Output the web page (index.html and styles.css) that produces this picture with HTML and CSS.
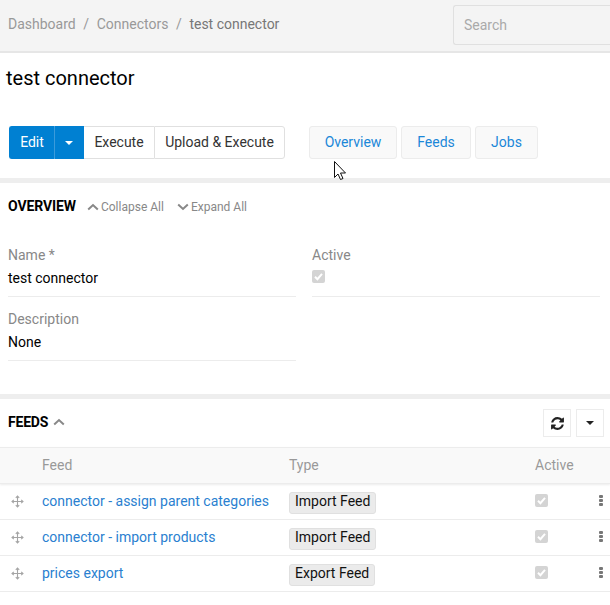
FILE: index.html
```html
<!DOCTYPE html>
<html lang="en">
<head>
	<meta charset="UTF-8">
	<title>test connector</title>
	<link rel="stylesheet" href="styles.css">
</head>
<body>
	<div class="topbar">
		<div class="crumbs">
			<a>Dashboard</a><span class="sep">/</span><a>Connectors</a><span class="sep">/</span><span class="current">test connector</span>
		</div>
		<div class="search">Search</div>
	</div>

	<h1 class="title">test connector</h1>

	<div class="actions">
		<div class="btn-group">
			<div class="btn primary edit">Edit</div>
			<div class="btn primary caret-btn"><i class="caret white"></i></div>
			<div class="btn plain execute">Execute</div>
			<div class="btn plain upload">Upload &amp; Execute</div>
		</div>
		<div class="tabs">
			<div class="tab tab-overview">Overview</div>
			<div class="tab tab-feeds">Feeds</div>
			<div class="tab tab-jobs">Jobs</div>
		</div>
	</div>

	<!-- overview -->
	<section class="panel overview">
		<div class="panel-head">
			<b>OVERVIEW</b>
			<span class="toggle first">
				<svg width="12" height="8" viewBox="0 0 12 8"><path d="M1.2 6.5 6 2l4.8 4.5" fill="none" stroke="#888" stroke-width="2"/></svg>Collapse All
			</span>
			<span class="toggle">
				<svg width="12" height="8" viewBox="0 0 12 8"><path d="M1.2 1.5 6 6l4.8-4.5" fill="none" stroke="#888" stroke-width="2"/></svg>Expand All
			</span>
		</div>
		<div class="fields">
			<div class="field">
				<label>Name *</label>
				<div class="value">test connector</div>
			</div>
			<div class="field">
				<label>Active</label>
				<div class="value"><span class="check"><svg width="13" height="13" viewBox="0 0 13 13"><path d="M3 6.8 5.4 9.2 10 3.8" fill="none" stroke="#fff" stroke-width="2"/></svg></span></div>
			</div>
			<div class="field">
				<label>Description</label>
				<div class="value">None</div>
			</div>
		</div>
	</section>

	<!-- feeds -->
	<section class="panel feeds">
		<div class="feeds-head">
			<b>FEEDS</b>
			<svg class="feeds-arrow" width="12" height="8" viewBox="0 0 12 8"><path d="M1.2 6.5 6 2l4.8 4.5" fill="none" stroke="#888" stroke-width="2"/></svg>
			<div class="tools">
				<div class="tool">
					<svg width="15" height="15" viewBox="0 0 1792 1792"><path fill="#222" d="M1639 1056q0 5-1 7-64 268-268 434.5t-478 166.5q-146 0-282.5-55t-243.5-157l-129 129q-19 19-45 19t-45-19-19-45v-448q0-26 19-45t45-19h448q26 0 45 19t19 45-19 45l-137 137q71 66 161 102t187 36q134 0 250-65t186-179q11-17 53-117 8-23 30-23h192q13 0 22.5 9.5t9.5 22.5zm25-800v448q0 26-19 45t-45 19h-448q-26 0-45-19t-19-45 19-45l138-138q-148-137-349-137-134 0-250 65t-186 179q-11 17-53 117-8 23-30 23h-199q-13 0-22.5-9.5t-9.5-22.5v-7q65-268 270-434.5t480-166.5q146 0 284 55.5t245 156.5l130-129q19-19 45-19t45 19 19 45z"/></svg>
				</div>
				<div class="tool"><i class="caret dark"></i></div>
			</div>
		</div>
		<div class="row header">
			<div></div>
			<div>Feed</div>
			<div>Type</div>
			<div>Active</div>
			<div></div>
		</div>
		<div class="row">
			<div class="handle"><svg width="13" height="13" viewBox="0 0 13 13"><path d="M6.5 1v11M1 6.5h11M4.8 2.8 6.5 1l1.700 1.800M4.800 10.200 6.500 12l1.700-1.800M2.800 4.800 1 6.500l1.800 1.700M10.200 4.800 12 6.500l-1.800 1.700" fill="none" stroke="#a5a5a5" stroke-width="1.100"/></svg></div>
			<a class="feed-link">connector - assign parent categories</a>
			<div><span class="tag">Import Feed</span></div>
			<div><span class="check"><svg width="13" height="13" viewBox="0 0 13 13"><path d="M3 6.8 5.4 9.2 10 3.8" fill="none" stroke="#fff" stroke-width="2"/></svg></span></div>
			<div class="dots"><i></i><i></i><i></i></div>
		</div>
		<div class="row">
			<div class="handle"><svg width="13" height="13" viewBox="0 0 13 13"><path d="M6.5 1v11M1 6.5h11M4.8 2.8 6.5 1l1.700 1.800M4.800 10.200 6.500 12l1.700-1.800M2.800 4.800 1 6.500l1.800 1.700M10.200 4.800 12 6.500l-1.800 1.700" fill="none" stroke="#a5a5a5" stroke-width="1.100"/></svg></div>
			<a class="feed-link">connector - import products</a>
			<div><span class="tag">Import Feed</span></div>
			<div><span class="check"><svg width="13" height="13" viewBox="0 0 13 13"><path d="M3 6.8 5.4 9.2 10 3.8" fill="none" stroke="#fff" stroke-width="2"/></svg></span></div>
			<div class="dots"><i></i><i></i><i></i></div>
		</div>
		<div class="row">
			<div class="handle"><svg width="13" height="13" viewBox="0 0 13 13"><path d="M6.5 1v11M1 6.5h11M4.8 2.8 6.5 1l1.700 1.800M4.800 10.200 6.500 12l1.700-1.800M2.800 4.800 1 6.500l1.800 1.700M10.200 4.800 12 6.500l-1.800 1.700" fill="none" stroke="#a5a5a5" stroke-width="1.100"/></svg></div>
			<a class="feed-link">prices export</a>
			<div><span class="tag">Export Feed</span></div>
			<div><span class="check"><svg width="13" height="13" viewBox="0 0 13 13"><path d="M3 6.8 5.4 9.2 10 3.8" fill="none" stroke="#fff" stroke-width="2"/></svg></span></div>
			<div class="dots"><i></i><i></i><i></i></div>
		</div>
	</section>

	<!-- mouse pointer sits over the page -->
	<svg class="pointer" width="14" height="20" viewBox="0 0 14 20"><path d="M.5.5v16L4 13l2.500 5.500 2.500-1L6.500 12h5z" fill="#fff" stroke="#111" stroke-width="1"/></svg>
</body>
</html>
```

FILE: styles.css
```css
*{margin: 0;padding: 0;box-sizing: border-box;}
html,body{height: 605px;overflow: hidden;}
body{position: relative;background: #fff;font-family: Roboto,"Liberation Sans",sans-serif;font-size: 14px;color: #000;}

.topbar{height: 53px;background: #f4f4f4;border-bottom: 2px solid #e6e6e6;display: flex;justify-content: space-between;padding: 5px 0 0 8px;}
.crumbs{padding-top: 11px;line-height: 17px;color: #999;white-space: nowrap;}
.crumbs .sep{margin: 0 7.6px;}
.crumbs .current{color: #777;}
.search{width: 157px;height: 40px;border: 1px solid #e0e0e0;border-right: 0;border-radius: 3px 0 0 3px;padding: 0 10px;line-height: 38px;color: #aaa;}

.title{font-size: 20px;font-weight: 400;line-height: 24px;padding: 13px 0 0 6px;height: 73px;}

.actions{display: flex;padding-left: 9px;height: 52px;}
.btn-group{display: flex;height: 33px;}
.btn{line-height: 31px;text-align: center;border: 1px solid #e0e0e0;background: #fff;color: #333;}
.btn.primary{background: #0080d2;border-color: #0080d2;color: #fff;}
.btn.edit{width: 46px;border-radius: 3px 0 0 3px;border-right-color: #3b9bdb;}
.caret-btn{width: 29px;border-left: 0;border-radius: 0;display: flex;align-items: center;justify-content: center;}
.execute{width: 70px;border-left: 0;border-right: 0;}
.upload{width: 131px;border-radius: 0 3px 3px 0;}
.caret{display: inline-block;width: 0;height: 0;border-left: 4px solid transparent;border-right: 4px solid transparent;border-top: 4px solid #222;}
.caret.white{border-top-color: #fff;}
.tabs{display: flex;gap: 4px;margin-left: 24px;}
.tab{height: 33px;line-height: 31px;text-align: center;background: #f9f9f9;border: 1px solid #ececec;border-radius: 3px;color: #1b87d8;}
.tab-overview{width: 88px;}
.tab-feeds{width: 70px;}
.tab-jobs{width: 63px;}

.panel{border-top: 5px solid #eee;}
.overview{height: 216px;}
.panel-head{display: flex;align-items: center;height: 46px;padding: 0 0 0 8px;}
.panel-head b{font-weight: 700;letter-spacing: -0.1px;}
.toggle{display: flex;align-items: center;gap: 2px;font-size: 12px;color: #888;margin: 2px 0 0 13px;}
.toggle.first{margin-left: 11px;}

.fields{display: grid;grid-template-columns: 288px 288px;column-gap: 16px;row-gap: 14px;padding: 18px 0 0 8px;}
.field{height: 50px;border-bottom: 1px solid #ececec;}
.field label{display: block;line-height: 17px;color: #888;height: 23px;}
.field .value{line-height: 17px;}

.check{display: inline-block;width: 13px;height: 13px;border-radius: 2px;background: #d4d4d4;vertical-align: top;}
.check svg{display: block;}

.feeds-head{display: flex;align-items: center;height: 48px;padding: 0 6px 0 8px;}
.feeds-head b{font-weight: 700;letter-spacing: -0.2px;margin-bottom: 2px;}
.feeds-arrow{margin: 0 0 2px 5px;}
.tools{display: flex;gap: 5px;margin-left: auto;}
.tool{width: 28px;height: 28px;border: 1px solid #ececec;display: flex;align-items: center;justify-content: center;}

.row{display: grid;grid-template-columns: 42px 247px 246px 59px 14px;align-items: center;height: 36px;border-bottom: 1px solid #ececec;}
.row.header{height: 37px;padding-bottom: 2px;background: #f9f9f9;border-top: 1px solid #ececec;color: #999;box-shadow: 0 1px 2px rgba(0,0,0,.08);}
.handle{padding-left: 11px;}
.handle svg{display: block;}
.feed-link{color: #2a7fd0;white-space: nowrap;margin-bottom: 2px;}
.tag{display: block;width: fit-content;height: 22px;margin-top: 2px;line-height: 16px;padding: 0 5px;background: #ebebeb;border: 1px solid #e0e0e0;border-radius: 3px;color: #111;}
.dots{display: flex;flex-direction: column;gap: 1px;align-items: center;margin-bottom: 2px;}
.dots i{display: block;width: 4px;height: 3px;border-radius: 1px;background: #777;}

.pointer{position: absolute;left: 334px;top: 161px;}
```
